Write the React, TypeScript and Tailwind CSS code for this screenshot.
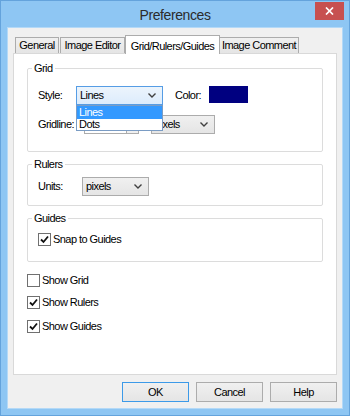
import React from "react";

function Chevron() {
  return (
    <svg width="8" height="5" viewBox="0 0 8 5" className="shrink-0">
      <polyline points="0.5,0.5 4,4 7.5,0.5" fill="none" stroke="#404040" strokeWidth="1.4" />
    </svg>
  );
}

function Select({ value, width, focused, children }: { value: string; width: string; focused?: boolean; children?: React.ReactNode }) {
  return (
    <div className={`relative ${width} h-[19px]`}>
      <div
        className={
          focused
            ? "w-full h-full flex items-center justify-between pl-[3px] pr-[6px] border border-[#569de5] bg-gradient-to-b from-[#ecf4fc] to-[#dcecfc]"
            : "w-full h-full flex items-center justify-between pl-[3px] pr-[6px] border border-[#acacac] bg-gradient-to-b from-[#f0f0f0] to-[#e5e5e5]"
        }
      >
        <span>{value}</span>
        <Chevron />
      </div>
      {children}
    </div>
  );
}

function Check({ checked, label }: { checked: boolean; label: string }) {
  return (
    <div className="flex items-center gap-[2px] h-[13px]">
      <div className="w-[13px] h-[13px] border border-[#707070] bg-white flex items-center justify-center shrink-0">
        {checked && (
          <svg width="9" height="9" viewBox="0 0 9 9">
            <polyline points="1,4.5 3.5,7 8,1.5" fill="none" stroke="#111" strokeWidth="1.8" />
          </svg>
        )}
      </div>
      <span>{label}</span>
    </div>
  );
}

function Button({ label, def }: { label: string; def?: boolean }) {
  return (
    <div
      className={
        def
          ? "w-[67px] h-[20px] flex items-center justify-center border border-[#3c9ae8] bg-gradient-to-b from-[#f0f0f0] to-[#e5e5e5]"
          : "w-[67px] h-[20px] flex items-center justify-center border border-[#acacac] bg-gradient-to-b from-[#f0f0f0] to-[#e5e5e5]"
      }
    >
      {label}
    </div>
  );
}

export default function App() {
  return (
    <div className="w-[350px] h-[416px] bg-[#8ec6f3] border border-[#64a3dc] flex flex-col font-['Liberation_Sans',Arial,sans-serif] text-[11px] tracking-[-0.55px] text-black">
      {/* Title bar */}
      <div className="h-[26px] shrink-0 grid grid-cols-[1fr_auto_1fr]">
        <div />
        <div className="text-[14px] tracking-[-0.4px] text-[#2b2b2b] leading-[26px] pt-[1px]">Preferences</div>
        <div className="flex justify-end items-start pr-[5px] pt-[1px]">
          <div className="w-[29px] h-[18px] bg-[#c75050] flex items-center justify-center">
            <svg width="9" height="8" viewBox="0 0 9 8">
              <path d="M1 0.5 L8 7.5 M8 0.5 L1 7.5" stroke="#fff" strokeWidth="1.7" />
            </svg>
          </div>
        </div>
      </div>

      {/* Client area */}
      <div className="mx-[6px] h-[382px] shrink-0 border border-[#b4d9f7] bg-[#f0f0f0] flex flex-col">
        <div className="mx-[5px] flex flex-col">
          {/* Tabs */}
          <div className="h-[25px] flex items-end pl-[2px]">
            <div className="w-[44px] h-[16px] flex items-center justify-center border border-b-0 border-[#acacac] bg-gradient-to-b from-[#f0f0f0] to-[#e5e5e5]">General</div>
            <div className="w-[65px] h-[16px] ml-px flex items-center justify-center border border-b-0 border-[#acacac] bg-gradient-to-b from-[#f0f0f0] to-[#e5e5e5]">Image Editor</div>
            <div className="relative z-10 w-[95px] h-[19px] -mb-px flex items-start pt-[2px] justify-center border border-b-0 border-[#acacac] bg-white">Grid/Rulers/Guides</div>
            <div className="w-[79px] h-[16px] flex items-center justify-center border border-b-0 border-l-0 border-[#acacac] bg-gradient-to-b from-[#f0f0f0] to-[#e5e5e5]">Image Comment</div>
          </div>

          {/* Panel */}
          <div className="h-[322px] border border-[#d9d9d9] bg-white pl-[13px] pt-[8px] flex flex-col">
            {/* Grid */}
            <fieldset className="w-[296px] border border-[#dcdcdc] rounded-[2px]">
              <legend className="ml-[4px] px-[2px] leading-[12px]">Grid</legend>
              <div className="pl-[10px] pt-[12px] pb-[17px] flex flex-col">
                <div className="flex items-center h-[18px]">
                  <span className="w-[38px]">Style:</span>
                  <Select value="Lines" width="w-[87px]" focused>
                    <div className="absolute left-0 top-full w-full z-20 border border-[#7a9cc4] bg-white flex flex-col">
                      <div className="h-[13px] leading-[13px] pl-[2px] bg-[#3399ff] text-white">Lines</div>
                      <div className="h-[11px] leading-[11px] pl-[2px]">Dots</div>
                    </div>
                  </Select>
                  <span className="ml-[12px] w-[34px]">Color:</span>
                  <div className="w-[39px] h-[17px] bg-[#000080] -mt-[2px]" />
                </div>
                <div className="flex items-center mt-[10px] h-[20px]">
                  <span className="w-[46px]">Gridline:</span>
                  <div className="w-[55px] h-[20px] border border-[#acacac] bg-white flex justify-end">
                    <div className="w-[12px] h-full flex items-center justify-center bg-[#f0f0f0] border-l border-[#acacac]">
                      <svg width="6" height="4" viewBox="0 0 6 4">
                        <polygon points="0,0 6,0 3,4" fill="#111" />
                      </svg>
                    </div>
                  </div>
                  <div className="ml-[12px]">
                    <Select value="pixels" width="w-[64px]" />
                  </div>
                </div>
              </div>
            </fieldset>

            {/* Rulers */}
            <fieldset className="mt-[6px] w-[296px] border border-[#dcdcdc] rounded-[2px]">
              <legend className="ml-[4px] px-[2px] leading-[12px]">Rulers</legend>
              <div className="pl-[10px] pt-[7px] pb-[9px] flex items-center">
                <span className="w-[44px]">Units:</span>
                <Select value="pixels" width="w-[67px]" />
              </div>
            </fieldset>

            {/* Guides */}
            <fieldset className="mt-[6px] w-[296px] border border-[#dcdcdc] rounded-[2px]">
              <legend className="ml-[4px] px-[2px] leading-[12px]">Guides</legend>
              <div className="pl-[10px] pt-[9px] pb-[15px]">
                <Check checked label="Snap to Guides" />
              </div>
            </fieldset>

            <div className="mt-[12px] flex flex-col">
              <Check checked={false} label="Show Grid" />
              <div className="mt-[9px]">
                <Check checked label="Show Rulers" />
              </div>
              <div className="mt-[11px]">
                <Check checked label="Show Guides" />
              </div>
            </div>
          </div>
        </div>

        {/* Buttons */}
        <div className="mt-[7px] flex justify-end gap-[7px] pr-[5px]">
          <Button label="OK" def />
          <Button label="Cancel" />
          <Button label="Help" />
        </div>
      </div>
    </div>
  );
}
